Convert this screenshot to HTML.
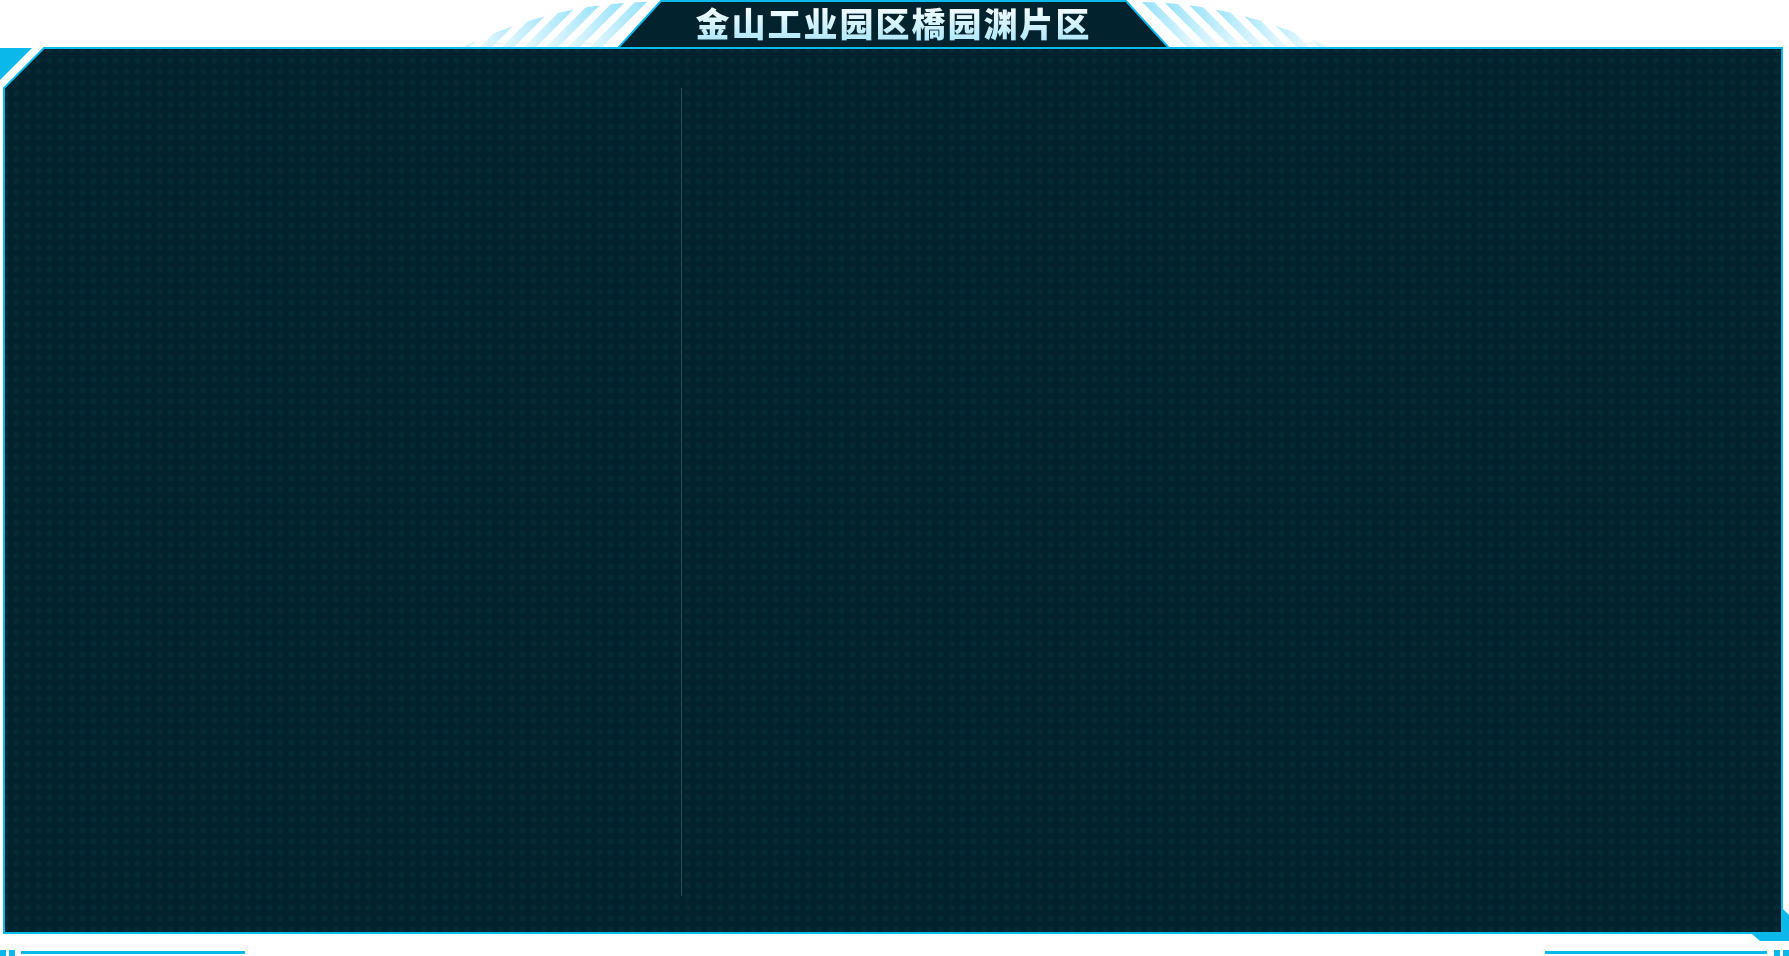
<!DOCTYPE html>
<html><head><meta charset="utf-8"><style>
html,body{margin:0;padding:0;background:#fff;width:1789px;height:956px;overflow:hidden;position:relative}
svg{position:absolute;left:0;top:0}
.t{position:absolute;left:661px;width:465px;top:3px;height:42px;text-align:center;font-family:"Liberation Sans","Noto Sans CJK SC",sans-serif;font-weight:900;font-size:34px;line-height:46px;letter-spacing:2px;color:#d8f6ff;background:linear-gradient(#ffffff,#a6e6fb);-webkit-background-clip:text;background-clip:text;-webkit-text-fill-color:transparent}
</style></head><body>
<svg width="1789" height="956" viewBox="0 0 1789 956">
<defs>
<pattern id="dots" width="11" height="11" patternUnits="userSpaceOnUse">
<rect width="11" height="11" fill="#02222e"/>
<circle cx="5.5" cy="5.5" r="3" fill="#052a36"/>
</pattern>
<linearGradient id="gl" x1="1" x2="0" y1="0" y2="0"><stop offset="0" stop-color="#8fdff8"/><stop offset="1" stop-color="#e9f9fe"/></linearGradient>
<linearGradient id="gr" x1="0" x2="1" y1="0" y2="0"><stop offset="0" stop-color="#8fdff8"/><stop offset="1" stop-color="#eefbfe"/></linearGradient>
<clipPath id="arc"><path d="M460 48 Q560 0 660 2 L1130 2 Q1230 0 1330 48 Z"/></clipPath>
</defs>
<g clip-path="url(#arc)">
<g fill="url(#gr)">
<path d="M1140 0h12l48 48h-12z"/><path d="M1162 0h12l48 48h-12z"/><path d="M1184 0h12l48 48h-12z"/><path d="M1206 0h12l48 48h-12z"/><path d="M1228 0h12l48 48h-12z"/><path d="M1250 0h12l48 48h-12z"/><path d="M1272 0h12l48 48h-12z"/><path d="M1294 0h12l48 48h-12z"/>
</g>
<g fill="url(#gl)">
<path d="M649 0h-12l-48 48h12z"/><path d="M627 0h-12l-48 48h12z"/><path d="M605 0h-12l-48 48h12z"/><path d="M583 0h-12l-48 48h12z"/><path d="M561 0h-12l-48 48h12z"/><path d="M539 0h-12l-48 48h12z"/><path d="M517 0h-12l-48 48h12z"/><path d="M495 0h-12l-48 48h12z"/>
</g>
</g>
<path d="M44 48 L1782 48 L1782 933 L4 933 L4 88 Z" fill="url(#dots)" stroke="#0bb8ea" stroke-width="2"/>
<path d="M0 48 L32 48 L0 80 Z" fill="#0bb8ea"/>
<path d="M661 1 L1126 1 L1169 48 L618 48 Z" fill="#02222e" stroke="#0bb8ea" stroke-width="2"/>
<rect x="681" y="88" width="1" height="808" fill="#2a4a56"/>
<path d="M1782 908 L1789 915 L1789 941 L1760 941 L1752 934 L1782 934 Z" fill="#0bb8ea"/>
<rect x="0" y="950" width="6" height="6" fill="#0bb8ea"/><rect x="9" y="950" width="6" height="6" fill="#0bb8ea"/>
<rect x="21" y="951" width="224" height="3" fill="#0bb8ea"/>
<rect x="1545" y="951" width="222" height="3" fill="#0bb8ea"/>
<rect x="1774" y="950" width="6" height="6" fill="#0bb8ea"/><rect x="1783" y="950" width="6" height="6" fill="#0bb8ea"/>
</svg>
<div class="t">金山工业园区橋园渊片区</div>
</body></html>
